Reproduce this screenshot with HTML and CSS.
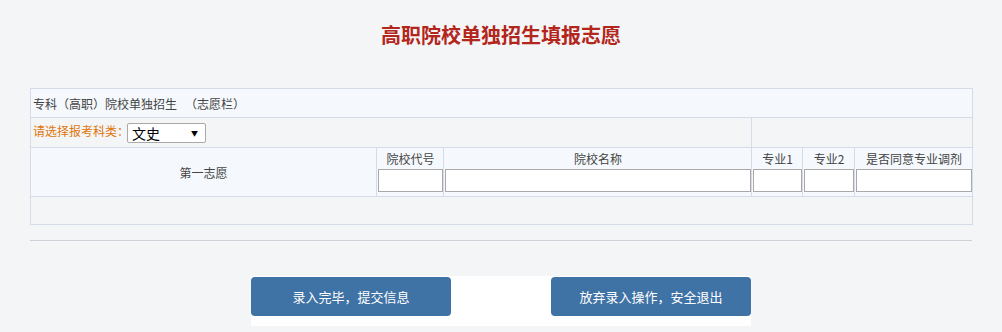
FILE: index.html
```html
<!DOCTYPE html>
<html>
  <head>
    <meta charset="utf-8">
    <link rel="stylesheet" href="styles.css">
  </head>
  <body>
    <div class="page">
      <h1 class="title">高职院校单独招生填报志愿</h1>

      <table class="form-table">
        <colgroup>
          <col style="width: 346px">
          <col style="width: 67px">
          <col style="width: 308px">
          <col style="width: 51px">
          <col style="width: 52px">
          <col style="width: 118px">
        </colgroup>
        <tr class="row-caption">
          <td colspan="6">专科（高职）院校单独招生 &nbsp; （志愿栏）</td>
        </tr>
        <tr class="row-type">
          <td colspan="3">
            <span class="type-label">请选择报考科类：</span><span class="select-wrap"><select class="type-select">
              <option>文史</option>
              <option>理工</option>
            </select></span>
          </td>
          <td colspan="3"></td>
        </tr>
        <tr class="row-choice">
          <td class="choice-name">第一志愿</td>
          <td class="field"><div class="field-label">院校代号</div><input type="text" class="field-input"></td>
          <td class="field"><div class="field-label">院校名称</div><input type="text" class="field-input"></td>
          <td class="field"><div class="field-label">专业1</div><input type="text" class="field-input"></td>
          <td class="field"><div class="field-label">专业2</div><input type="text" class="field-input"></td>
          <td class="field"><div class="field-label">是否同意专业调剂</div><input type="text" class="field-input"></td>
        </tr>
        <tr class="row-empty">
          <td colspan="6"></td>
        </tr>
      </table>

      <div class="divider"></div>

      <div class="actions">
        <button class="action-btn" type="button">录入完毕，提交信息</button>
        <button class="action-btn" type="button">放弃录入操作，安全退出</button>
      </div>
    </div>
  </body>
</html>
```

FILE: styles.css
```css
body {
  margin: 0;
  background-color: #f4f5f7;
  font-family: "Noto Sans CJK SC", "Liberation Sans", sans-serif;
  font-size: 12px;
  color: #444;
}

.page {
  width: 942px;
  margin: 0 auto;
}

.title {
  margin: 23px 0 41px;
  text-align: center;
  font-size: 20px;
  line-height: 24px;
  font-weight: bold;
  color: #b3261c;
}

.form-table {
  width: 942px;
  table-layout: fixed;
  border-collapse: collapse;
}

.form-table td {
  border: 1px solid #d3dce7;
  padding: 0;
}

.row-caption td {
  height: 28px;
  padding-left: 2px;
  background-color: #f5f9fd;
}

.row-type td {
  height: 29px;
  padding-left: 2px;
}

.type-label {
  color: #e0760c;
}

.select-wrap {
  position: relative;
  display: inline-block;
  margin-left: -2px;
  vertical-align: middle;
}

/* little black arrow like the old native select */
.select-wrap::after {
  content: "▼";
  position: absolute;
  right: 8px;
  top: 4px;
  font-size: 7px;
  line-height: 12px;
  color: #000;
  pointer-events: none;
}

.type-select {
  display: block;
  width: 79px;
  height: 20px;
  padding: 0 0 0 4px;
  -webkit-appearance: none;
  appearance: none;
  font-family: "Noto Sans CJK SC", sans-serif;
  font-size: 14px;
  line-height: 18px;
  color: #000;
  background-color: #fff;
  border: 1px solid #a9a9a9;
  border-radius: 2px;
}

.row-choice td {
  height: 46px;
  background-color: #f5f9fd;
}

.choice-name {
  text-align: center;
}

.form-table .field {
  padding: 0 0 2px 1px;
  text-align: center;
  vertical-align: top;
}

.field-label {
  height: 21px;
  line-height: 21px;
}

.field-input {
  display: block;
  box-sizing: border-box;
  width: 100%;
  height: 23px;
  margin: 0;
  border: 1px solid #a9a9a9;
  background-color: #fff;
}

.row-empty td {
  height: 27px;
}

.divider {
  margin-top: 15px;
  border-top: 1px solid #cdd2d9;
}

.actions {
  display: flex;
  justify-content: space-between;
  width: 500px;
  margin: 35px auto 0;
  padding: 1px 0 10px;
  background-color: #fff;
}

.action-btn {
  width: 200px;
  height: 39px;
  border: none;
  border-radius: 4px;
  background-color: #3f72a5;
  color: #fff;
  font-family: "Noto Sans CJK SC", sans-serif;
  font-size: 13px;
}
```
